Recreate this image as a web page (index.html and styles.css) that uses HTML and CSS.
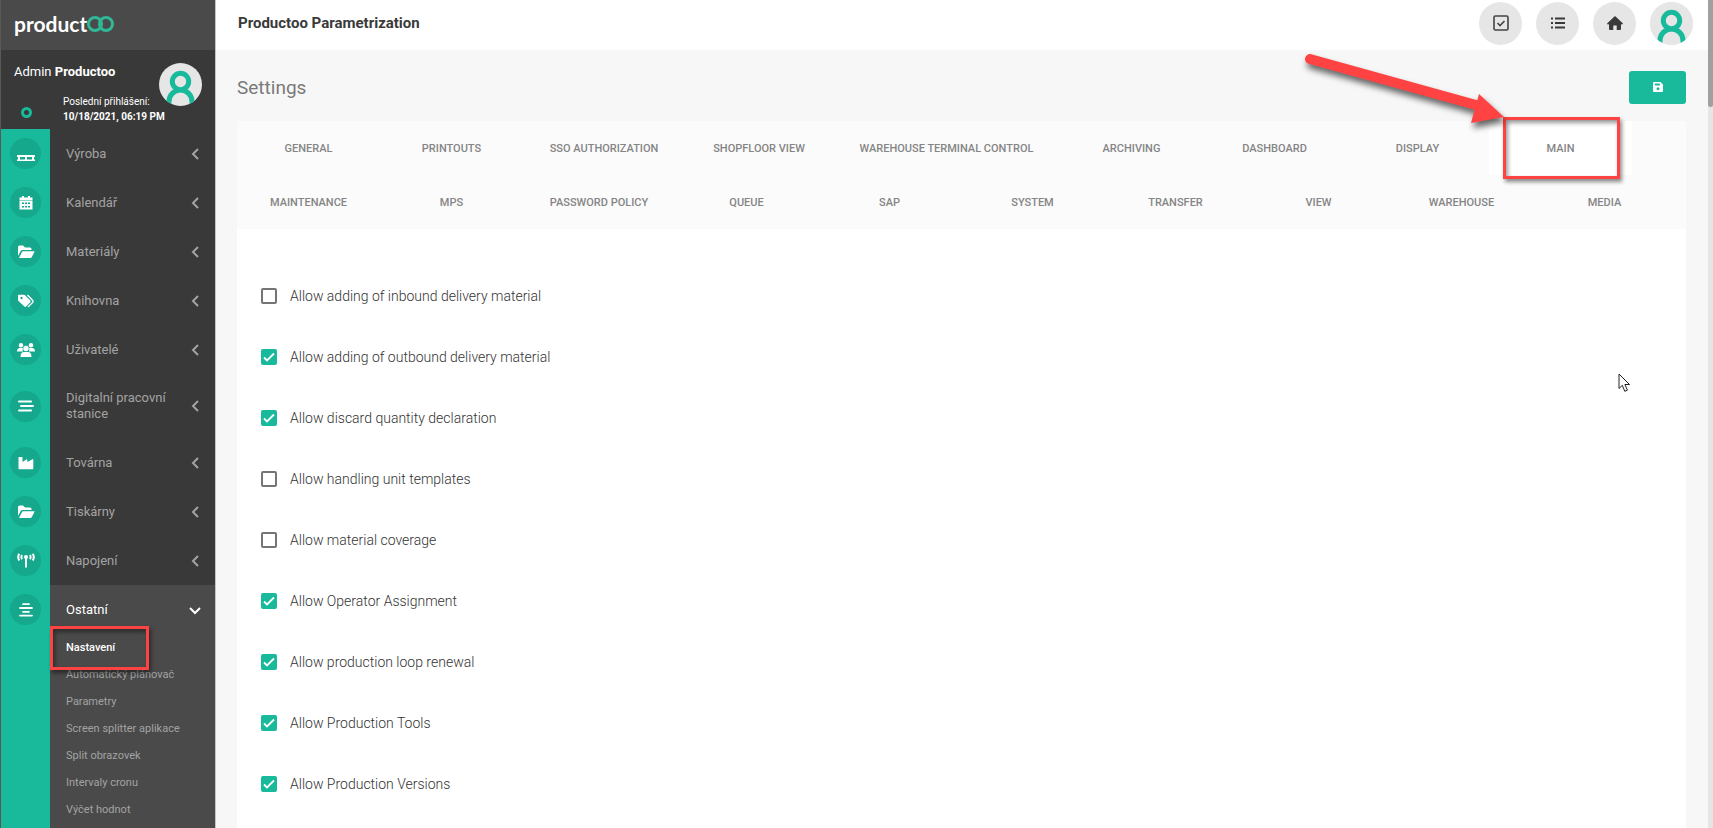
FILE: index.html
```html
<!DOCTYPE html>
<html lang="cs">
<head>
    <meta charset="UTF-8">
    <meta name="viewport" content="width=device-width, initial-scale=1.0">
    <title>Productoo Parametrization</title>
    <link rel="stylesheet" href="styles.css">
</head>
<body>
    <!-- shared icons -->
    <svg class="defs" aria-hidden="true">
        <symbol id="i-user" viewBox="0 0 43 43">
            <clipPath id="round"><circle cx="21.5" cy="21.5" r="21.5"/></clipPath>
            <g clip-path="url(#round)">
                <rect width="43" height="43" fill="#e6e6e6"/>
                <path d="M10 41v-2.500a11.500 11.500 0 0 1 23 0V41" fill="none" stroke="#18ba9b" stroke-width="5"/>
                <circle cx="21.500" cy="18.500" r="8.200" fill="#e6e6e6" stroke="#18ba9b" stroke-width="5"/>
            </g>
        </symbol>
        <symbol id="i-left" viewBox="0 0 12 14"><path d="M9 2L4 7l5 5" fill="none" stroke="currentColor" stroke-width="2"/></symbol>
        <symbol id="i-down" viewBox="0 0 12 14"><path d="M1 5l5 5 5-5" fill="none" stroke="currentColor" stroke-width="2"/></symbol>
        <symbol id="i-folder" viewBox="0 0 18 16"><path d="M1 12V3q0-1.500 1.500-1.500H6l2 2h5q1.500 0 1.500 1.500v1H5.500q-1.200 0-1.800 1zM2 14l3-6q.4-.8 1.200-.8H17q.8 0 .4.800l-2.700 5.200q-.4.800-1.400.8z" fill="#fff"/></symbol>
    </svg>

    <aside class="sidebar">
        <a class="logo" href="#">
            <span>product</span>
            <svg width="27" height="18" viewBox="0 0 27 18" aria-hidden="true">
                <g fill="none" stroke="#2fb898" stroke-width="3"><circle cx="8" cy="10" r="6.500"/><circle cx="19" cy="10" r="6.500"/></g>
            </svg>
        </a>
        <div class="profile">
            <div class="profile-text">
                <p class="profile-name">Admin <b>Productoo</b></p>
                <div class="last-login">
                    <span class="status"></span>
                    <p>Poslední přihlášení:<br><b>10/18/2021, 06:19 PM</b></p>
                </div>
            </div>
            <svg class="avatar"><use href="#i-user"/></svg>
        </div>
        <nav class="menu">
            <a class="item" href="#">
                <span class="icon"><i><svg viewBox="0 0 18 16"><path d="M0 9h18v2H0zM0 13.500h18v1.500H0zM1 11h2v3H1zM8 11h2v3H8zM15 11h2v3h-2z" fill="#fff"/></svg></i></span>
                <span class="label">Výroba</span><svg class="arrow"><use href="#i-left"/></svg>
            </a>
            <a class="item" href="#">
                <span class="icon"><i><svg viewBox="0 0 18 16"><path d="M2.500 2.500H5V1h2v1.500h4V1h2v1.500h2.500V5h-13z" fill="#fff"/><path d="M2.500 5.500h13v9h-13zM5 7.500v1.500h2V7.500zm3 0v1.500h2V7.500zm3 0v1.500h2V7.500zm-6 3.500v1.500h2V11zm3 0v1.500h2V11zm3 0v1.500h2V11z" fill="#fff" fill-rule="evenodd"/></svg></i></span>
                <span class="label">Kalendář</span><svg class="arrow"><use href="#i-left"/></svg>
            </a>
            <a class="item" href="#">
                <span class="icon"><i><svg><use href="#i-folder"/></svg></i></span>
                <span class="label">Materiály</span><svg class="arrow"><use href="#i-left"/></svg>
            </a>
            <a class="item" href="#">
                <span class="icon"><i><svg viewBox="0 0 18 16"><path d="M1 2.500q0-.8.800-.8h5q.6 0 1 .4l5.500 5.500q.8.900 0 1.700l-4.200 4.300q-.9.800-1.700 0L1.500 8Q1 7.600 1 7zm3.500 1.300a1.200 1.200 0 1 0 .01 0z" fill="#fff" fill-rule="evenodd"/><path d="M10.500 2l5.200 5.400q.8 1 0 2L11 14" fill="none" stroke="#fff" stroke-width="1.400"/></svg></i></span>
                <span class="label">Knihovna</span><svg class="arrow"><use href="#i-left"/></svg>
            </a>
            <a class="item" href="#">
                <span class="icon"><i><svg viewBox="0 0 18 16"><g fill="#fff"><circle cx="4" cy="3.200" r="2.200"/><circle cx="14" cy="3.200" r="2.200"/><circle cx="9" cy="6.500" r="2.700"/><path d="M0 9.500Q0 6 3 6h2q.8 0 1 .5-.8 1.500 0 3zM18 9.500Q18 6 15 6h-2q-.8 0-1 .5.8 1.500 0 3zM3.500 15q0-5 3.500-5h4q3.500 0 3.500 5z"/></g></svg></i></span>
                <span class="label">Uživatelé</span><svg class="arrow"><use href="#i-left"/></svg>
            </a>
            <a class="item item-tall" href="#">
                <span class="icon"><i><svg viewBox="0 0 18 16"><path d="M2 3.500h12M4 8h12M2 12.500h12" stroke="#fff" stroke-width="2" stroke-linecap="round"/></svg></i></span>
                <span class="label">Digitalní pracovní stanice</span><svg class="arrow"><use href="#i-left"/></svg>
            </a>
            <a class="item" href="#">
                <span class="icon"><i><svg viewBox="0 0 18 16"><path d="M1.500 2.500q0-.5.500-.5h3q.5 0 .5.500V7l4.200-2.700q.6-.3.600.3V7l5.200-2.800q.8-.4.800.3V13.500q0 .7-.7.700H2.200q-.7 0-.7-.7z" fill="#fff"/></svg></i></span>
                <span class="label">Továrna</span><svg class="arrow"><use href="#i-left"/></svg>
            </a>
            <a class="item" href="#">
                <span class="icon"><i><svg><use href="#i-folder"/></svg></i></span>
                <span class="label">Tiskárny</span><svg class="arrow"><use href="#i-left"/></svg>
            </a>
            <a class="item" href="#">
                <span class="icon"><i><svg viewBox="0 0 18 16"><g fill="none" stroke="#fff" stroke-width="2"><path d="M9 4v10.500M2.200.8q-2 3.300 0 6.600M15.800.8q2 3.300 0 6.600M5 2q-1.200 2 0 4.200M13 2q1.200 2 0 4.200"/></g><circle cx="9" cy="4" r="2" fill="#fff"/></svg></i></span>
                <span class="label">Napojení</span><svg class="arrow"><use href="#i-left"/></svg>
            </a>
            <a class="item item-open" href="#">
                <span class="icon"><i><svg viewBox="0 0 18 16"><path d="M6 2.200h6M3 6h12M6 9.800h6M3 13.600h12" stroke="#fff" stroke-width="1.800" stroke-linecap="round"/></svg></i></span>
                <span class="label">Ostatní</span><svg class="arrow"><use href="#i-down"/></svg>
            </a>
            <ul class="submenu">
                <li><a class="current" href="#">Nastavení</a><span class="mark"></span></li>
                <li><a href="#">Automatický plánovač</a></li>
                <li><a href="#">Parametry</a></li>
                <li><a href="#">Screen splitter aplikace</a></li>
                <li><a href="#">Split obrazovek</a></li>
                <li><a href="#">Intervaly cronu</a></li>
                <li><a href="#">Výčet hodnot</a></li>
            </ul>
        </nav>
    </aside>

    <div class="page">
        <header class="topbar">
            <h1>Productoo Parametrization</h1>
            <div class="actions">
                <button type="button" class="round" aria-label="Tasks"><svg width="16" height="16" viewBox="0 0 16 16"><rect x="1" y="1" width="14" height="14" rx="1.500" fill="none" stroke="#444" stroke-width="1.600"/><path d="M4.500 8l2.500 2.500L11.500 6" fill="none" stroke="#444" stroke-width="1.600"/></svg></button>
                <button type="button" class="round" aria-label="List"><svg width="16" height="16" viewBox="0 0 16 16"><path d="M5 3.500h10M5 8h10M5 12.500h10" stroke="#3a3a3a" stroke-width="1.800"/><path d="M1 3.500h2M1 8h2M1 12.500h2" stroke="#3a3a3a" stroke-width="2.200"/></svg></button>
                <button type="button" class="round" aria-label="Home"><svg width="16" height="16" viewBox="0 0 16 16"><path d="M8 1l8 7.500-.9 1.200-1.100-.7v5q0 1-1 1H9.700v-4.500H6.300V15H3q-1 0-1-1V9l-1.100.7L0 8.500z" fill="#3a3a3a"/></svg></button>
                <button type="button" class="round" aria-label="Profile"><svg class="avatar"><use href="#i-user"/></svg></button>
            </div>
        </header>
        <main>
            <div class="heading">
                <h2>Settings</h2>
                <button type="button" class="save" aria-label="Save"><svg width="10" height="10" viewBox="0 0 10 10"><path d="M1 0h6.500L10 2.500V9q0 1-1 1H1q-1 0-1-1V1q0-1 1-1zm.8 1.600v2h5v-2zM5 5.300a1.500 1.500 0 1 0 .01 0z" fill="#fff" fill-rule="evenodd"/></svg></button>
            </div>
            <div class="card">
                <nav class="tabs">
                    <a href="#">GENERAL</a>
                    <a href="#">PRINTOUTS</a>
                    <a href="#" class="w-sso">SSO AUTHORIZATION</a>
                    <a href="#" class="w-shopfloor">SHOPFLOOR VIEW</a>
                    <a href="#" class="w-terminal">WAREHOUSE TERMINAL CONTROL</a>
                    <a href="#">ARCHIVING</a>
                    <a href="#">DASHBOARD</a>
                    <a href="#">DISPLAY</a>
                    <a href="#" class="active">MAIN
                        <span class="mark"></span>
                        <svg class="pointer" width="210" height="80" viewBox="0 0 210 80" aria-hidden="true">
                            <path d="M10 10L176 56" stroke="#ff4343" stroke-width="10" stroke-linecap="round"/>
                            <path d="M179 45L204 68 171 74z" fill="#ff4343"/>
                        </svg>
                    </a>
                    <a href="#">MAINTENANCE</a>
                    <a href="#">MPS</a>
                    <a href="#" class="w-password">PASSWORD POLICY</a>
                    <a href="#">QUEUE</a>
                    <a href="#">SAP</a>
                    <a href="#">SYSTEM</a>
                    <a href="#">TRANSFER</a>
                    <a href="#">VIEW</a>
                    <a href="#">WAREHOUSE</a>
                    <a href="#">MEDIA</a>
                </nav>
                <form class="options">
                    <label><input type="checkbox"> Allow adding of inbound delivery material</label>
                    <label><input type="checkbox" checked> Allow adding of outbound delivery material</label>
                    <label><input type="checkbox" checked> Allow discard quantity declaration</label>
                    <label><input type="checkbox"> Allow handling unit templates</label>
                    <label><input type="checkbox"> Allow material coverage</label>
                    <label><input type="checkbox" checked> Allow Operator Assignment</label>
                    <label><input type="checkbox" checked> Allow production loop renewal</label>
                    <label><input type="checkbox" checked> Allow Production Tools</label>
                    <label><input type="checkbox" checked> Allow Production Versions</label>
                </form>
                <svg class="cursor" width="13" height="20" viewBox="0 0 13 20" aria-hidden="true"><path d="M1 1v14.500l3.300-3.200 2.500 6 2.600-1.100-2.500-5.700h4.600z" fill="#fff" stroke="#222"/></svg>
            </div>
        </main>
    </div>
    <div class="scrollbar"><span></span></div>
</body>
</html>
```

FILE: styles.css
```css
* { box-sizing: border-box; }
body {
  margin: 0;
  display: flex;
  height: 100vh;
  overflow: hidden;
  font-family: Roboto, "Liberation Sans", sans-serif;
  font-size: 13px;
  background: #f7f7f7;
}
a { color: inherit; text-decoration: none; }
h1, h2, p, ul { margin: 0; padding: 0; }
button { padding: 0; border: none; cursor: pointer; }
.defs { position: absolute; width: 0; height: 0; }

/* sidebar */
.sidebar {
  flex: none;
  display: flex;
  flex-direction: column;
  width: 216px;
  border-left: 1px solid #5e5855;
  border-right: 1px solid #c4c4c4;
  background: #393939;
  color: #fff;
}
.logo {
  flex: none;
  display: flex;
  align-items: center;
  height: 50px;
  padding: 0 0 4px 13px;
  background: #4a4a4a;
  font-family: Lato, sans-serif;
  font-size: 21px;
  font-weight: 700;
}
.profile { flex: none; display: flex; justify-content: space-between; height: 79px; padding: 13px 13px 0 13px; }
.profile-text { width: 145px; white-space: nowrap; }
.profile-name { font-size: 13px; line-height: 18px; }
.last-login { display: flex; align-items: center; gap: 31px; padding: 13px 0 0 7px; font-size: 10px; line-height: 15px; }
.status { flex: none; width: 11px; height: 11px; margin-top: 6px; border: 3px solid #18ba9b; border-radius: 50%; }
.avatar { flex: none; display: block; width: 43px; height: 43px; }
.menu {
  flex: 1;
  display: flex;
  flex-direction: column;
  background: linear-gradient(to right, #18ba9b 49px, transparent 49px);
  color: #a3a3a3;
}
.item { flex: none; display: flex; align-items: center; height: 49px; padding-right: 14px; line-height: 16px; }
.item-tall { height: 64px; }
.icon { flex: none; width: 49px; padding-left: 9px; }
.icon i { display: flex; align-items: center; justify-content: center; width: 31px; height: 31px; border-radius: 50%; background: #15a88c; }
.icon svg { width: 18px; height: 16px; }
.label { flex: 1; padding: 0 16px; }
.arrow { flex: none; width: 12px; height: 14px; }
.item-open { background: linear-gradient(to right, #18ba9b 49px, #4a4a4a 49px); color: #fff; }
.submenu { flex: 1; margin-left: 49px; list-style: none; background: #4a4a4a; font-size: 11px; line-height: 27px; }
.submenu li { position: relative; padding-left: 16px; }
.submenu .current { color: #fff; font-weight: 500; }

/* red highlight frames */
.mark { position: absolute; border: 3px solid #ff4343; box-shadow: 2px 3px 4px rgba(0, 0, 0, .45), inset 2px 3px 4px rgba(0, 0, 0, .4); }
.submenu .mark { left: 0; top: -8px; width: 99px; height: 44px; z-index: 1; }
.tabs .mark { left: 14px; top: -4px; width: 117px; height: 62px; }
.pointer { position: absolute; right: 122px; top: -72px; filter: drop-shadow(2px 5px 3px rgba(0, 0, 0, .6)); }

/* page */
.page { flex: 1; min-width: 0; }
.topbar { display: flex; align-items: center; justify-content: space-between; height: 50px; padding: 0 15px 4px 22px; background: #fff; }
.topbar h1 { font-size: 15px; font-weight: 700; color: #3a3a3a; }
.actions { display: flex; gap: 14px; }
.round { display: flex; align-items: center; justify-content: center; width: 43px; height: 43px; border-radius: 50%; background: #e6e6e6; }
main { padding: 21px 22px 0 21px; }
.heading { display: flex; align-items: center; justify-content: space-between; height: 33px; margin-bottom: 17px; }
.heading h2 { font-size: 19px; font-weight: 400; color: #7a7a7a; }
.save { width: 57px; height: 33px; border-radius: 3px; background: #18ba9b; }
.card { position: relative; background: #fff; }
.tabs { display: flex; flex-wrap: wrap; background: #fbfbfb; font-size: 11px; font-weight: 500; color: #858585; }
.tabs a { position: relative; width: 143px; height: 54px; line-height: 56px; text-align: center; white-space: nowrap; }
.tabs .active { background: #fff; }
.tabs .w-sso { width: 162px; }
.tabs .w-shopfloor { width: 148px; }
.tabs .w-terminal { width: 227px; }
.tabs .w-password { width: 152px; }
.options { padding: 36px 24px; }
.options label { display: flex; align-items: center; gap: 13px; height: 61px; font-size: 14px; font-weight: 300; color: #333; }
.options input {
  appearance: none;
  width: 16px;
  height: 16px;
  margin: 0;
  border: 2px solid #757575;
  border-radius: 2px;
}
.options input:checked {
  border: none;
  background: #18ba9b url("data:image/svg+xml,%3Csvg xmlns='http://www.w3.org/2000/svg' viewBox='0 0 16 16'%3E%3Cpath d='M3 8.500l3 3L13 4.500' fill='none' stroke='%23fff' stroke-width='1.800'/%3E%3C/svg%3E");
}
.cursor { position: absolute; right: 55px; top: 252px; }
.scrollbar { flex: none; width: 5px; background: #e5e5e5; }
.scrollbar span { display: block; height: 107px; border-radius: 0 0 3px 3px; background: #a0a0a0; }
```
